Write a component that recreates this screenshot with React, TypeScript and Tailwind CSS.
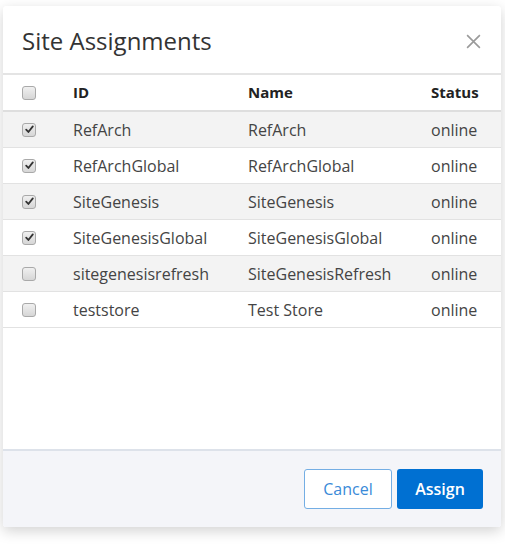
import React from "react";

type Site = { id: string; name: string; status: string; checked: boolean };

const sites: Site[] = [
  { id: "RefArch", name: "RefArch", status: "online", checked: true },
  { id: "RefArchGlobal", name: "RefArchGlobal", status: "online", checked: true },
  { id: "SiteGenesis", name: "SiteGenesis", status: "online", checked: true },
  { id: "SiteGenesisGlobal", name: "SiteGenesisGlobal", status: "online", checked: true },
  { id: "sitegenesisrefresh", name: "SiteGenesisRefresh", status: "online", checked: false },
  { id: "teststore", name: "Test Store", status: "online", checked: false },
];

function Checkbox({ checked }: { checked: boolean }) {
  return (
    <span className="flex h-[14px] w-[14px] items-center justify-center rounded-[3px] border border-[#a9a9a9] bg-gradient-to-b from-[#f0f0f0] to-[#d6d6d6]">
      {checked && (
        <svg width="9" height="9" viewBox="0 0 9 9">
          <path d="M1.2 4.6 L3.4 7 L7.8 1.4" fill="none" stroke="#333" strokeWidth="1.8" strokeLinecap="round" strokeLinejoin="round" />
        </svg>
      )}
    </span>
  );
}

export default function App() {
  return (
    <div className="relative h-[550px] w-[505px] overflow-hidden bg-white font-['Open_Sans',sans-serif]">
      <div className="absolute left-[3px] top-[6px] flex h-[521px] w-[498px] flex-col rounded-[3px] bg-white shadow-[0_4px_14px_rgba(0,0,0,0.18)]">
        <div className="flex h-[69px] items-center justify-between border-b-2 border-[#e4e4e4] pl-[19px] pr-[19px]">
          <h2 className="pt-[2px] text-[24px] text-[#333]">Site Assignments</h2>
          <svg width="17" height="17" viewBox="0 0 16 16" className="mt-[4px]">
            <path d="M2 2 L14 14 M14 2 L2 14" stroke="#9a9a9a" strokeWidth="1.5" />
          </svg>
        </div>
        <div className="flex h-[37px] items-center border-b-2 border-[#dedede] text-[15px] font-bold text-[#222]">
          <div className="w-[70px] pl-[19px]"><Checkbox checked={false} /></div>
          <div className="w-[175px]">ID</div>
          <div className="w-[183px]">Name</div>
          <div>Status</div>
        </div>
        {sites.map((s, i) => (
          <div
            key={s.id}
            className={`flex h-[36px] items-center border-b border-[#e2e2e2] text-[16px] text-[#444] ${i % 2 === 0 ? "bg-[#f3f3f3]" : "bg-white"}`}
          >
            <div className="w-[70px] pl-[19px]"><Checkbox checked={s.checked} /></div>
            <div className="w-[175px]">{s.id}</div>
            <div className="w-[183px]">{s.name}</div>
            <div>{s.status}</div>
          </div>
        ))}
        <div className="flex-1" />
        <div className="flex h-[78px] items-center justify-end gap-[5px] rounded-b-[3px] border-t-2 border-[#dde2ea] bg-[#f4f5f9] pr-[18px]">
          <button className="h-[40px] w-[88px] rounded-[3px] border border-[#74aee4] bg-white text-[16px] text-[#3a8ad8]">Cancel</button>
          <button className="h-[40px] w-[86px] rounded-[3px] bg-[#0070d2] text-[16px] font-semibold text-white">Assign</button>
        </div>
      </div>
    </div>
  );
}
